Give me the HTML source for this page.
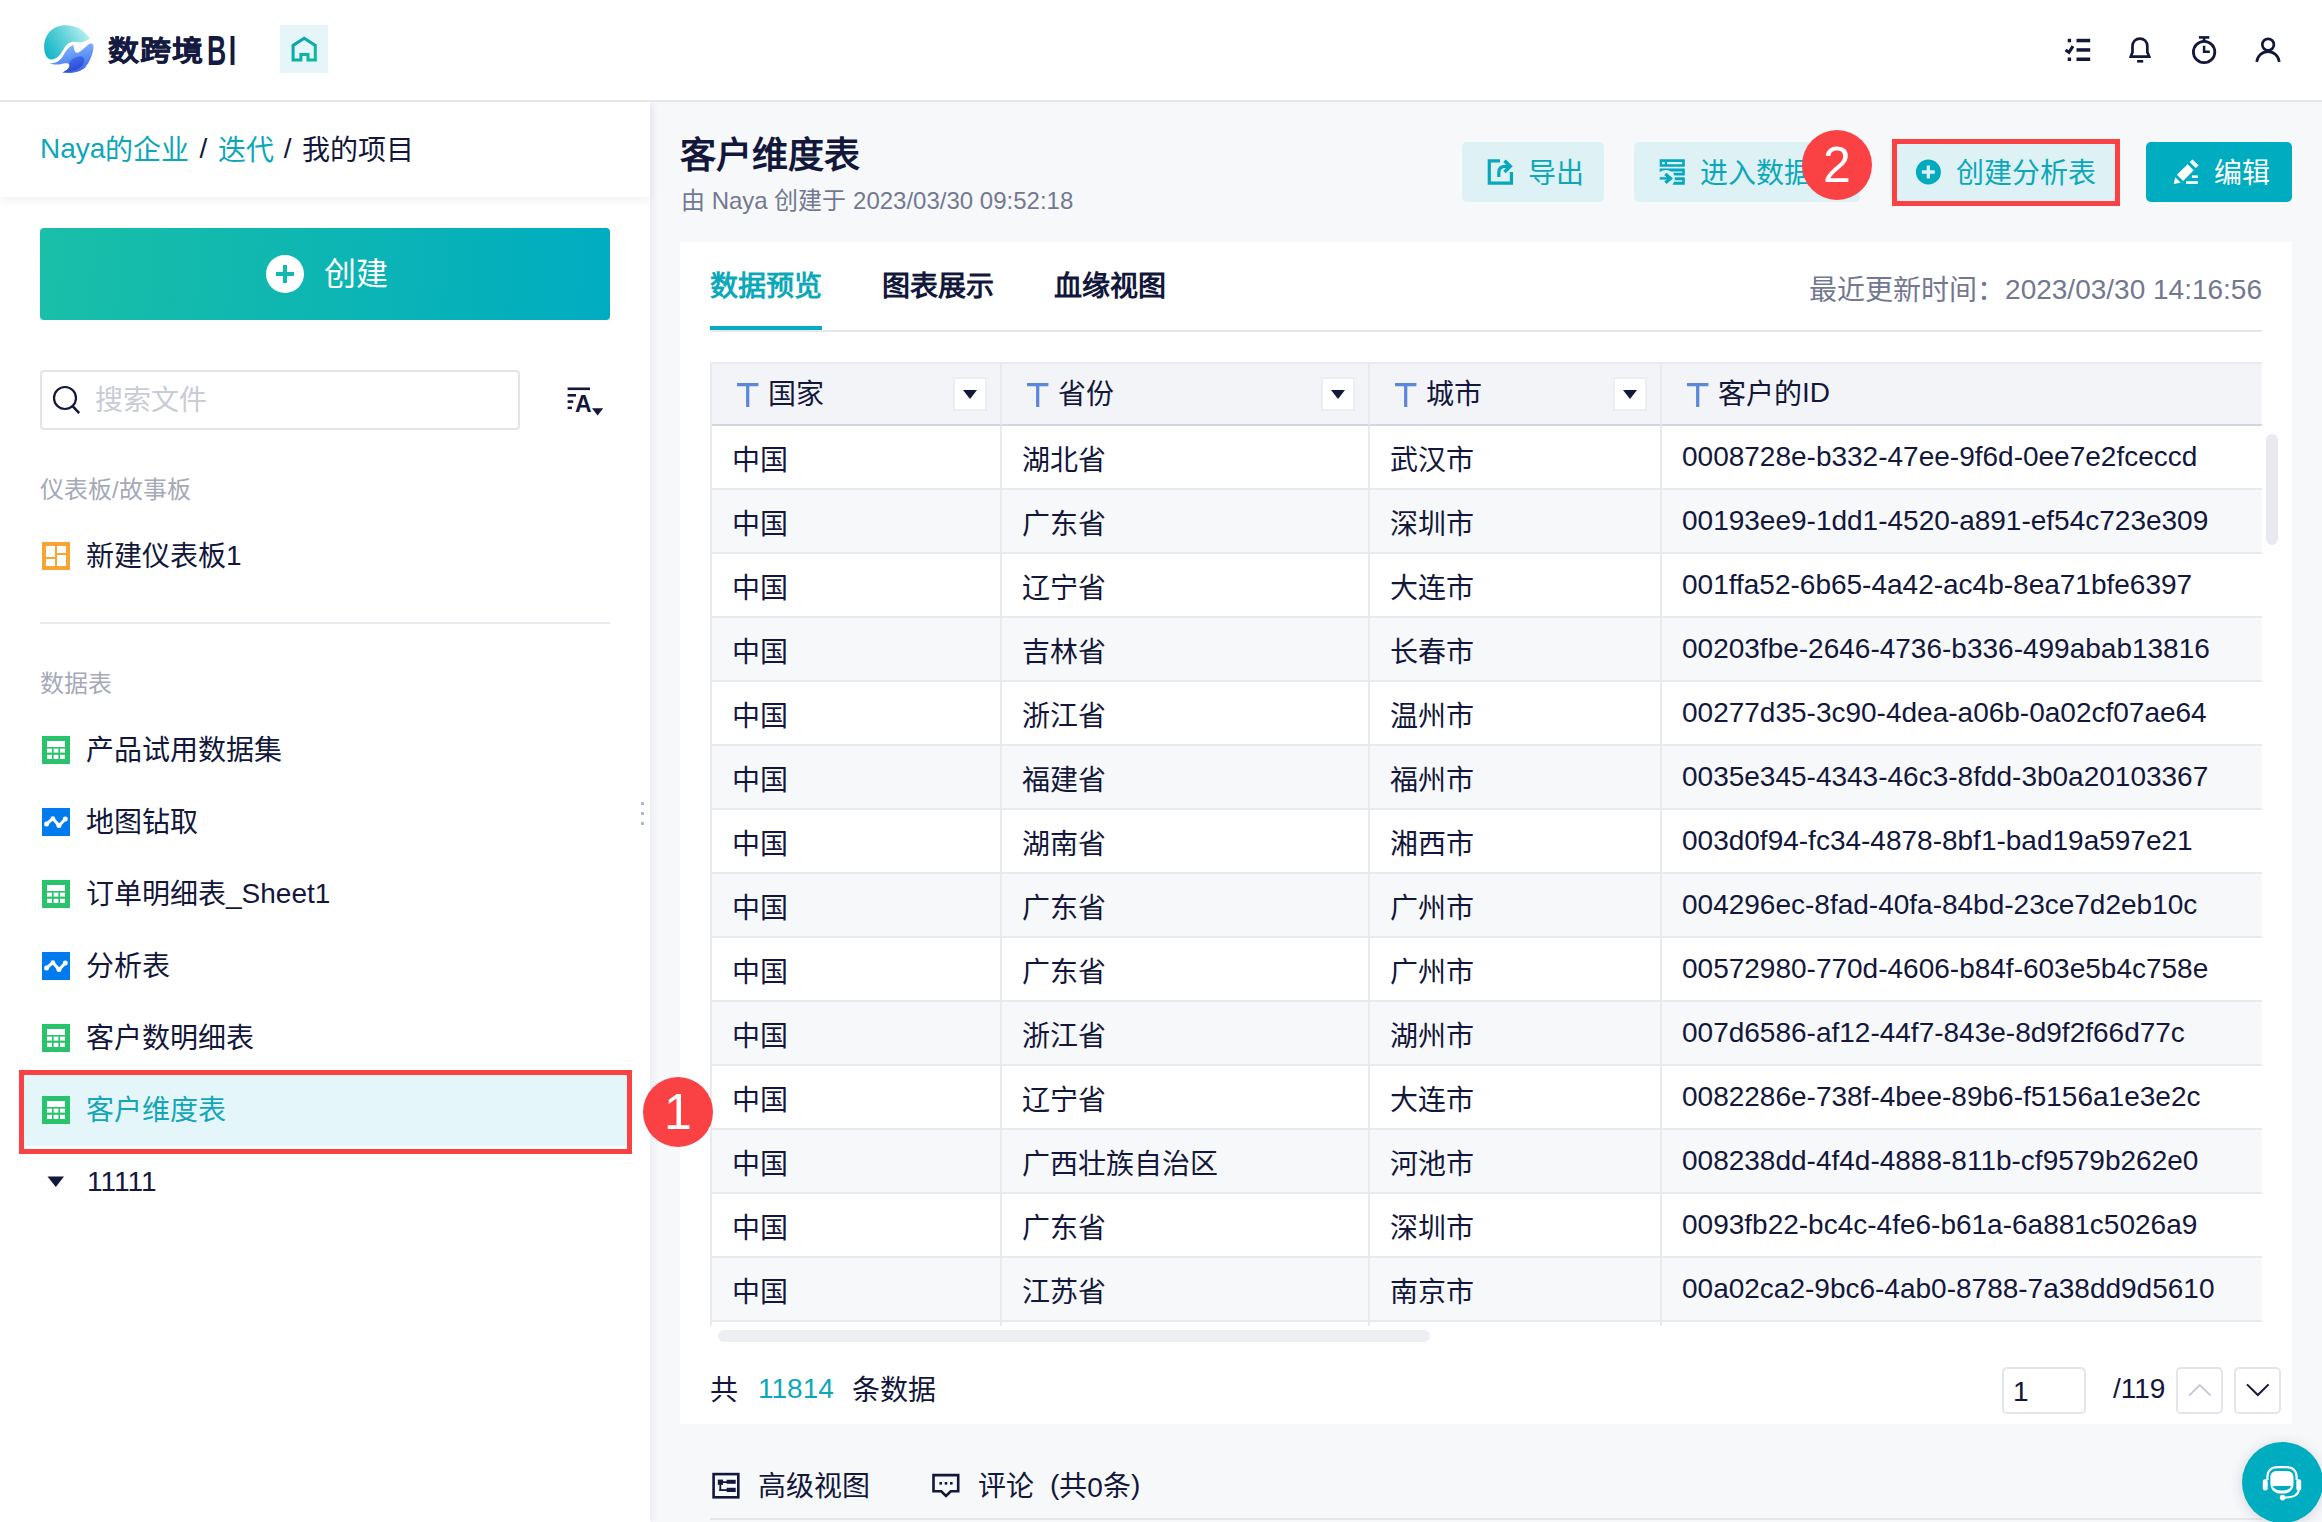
<!DOCTYPE html>
<html lang="zh-CN">
<head>
<meta charset="utf-8">
<title>客户维度表 - 数跨境BI</title>
<style>
*{box-sizing:border-box;margin:0;padding:0}
html,body{width:2322px;height:1522px;overflow:hidden}
body{position:relative;background:#f7f8fa;font-family:"Liberation Sans",sans-serif;color:#12173b;font-size:28px;line-height:1}
.abs{position:absolute}
.z{position:relative;top:2px}
.z1{position:relative;top:1px}
svg{display:block}

/* ---------- top header ---------- */
#top{position:absolute;left:0;top:0;width:2322px;height:102px;background:#fff;border-bottom:2px solid #e6e7ec;z-index:5}
#logo{position:absolute;left:36px;top:18px;width:66px;height:62px}
#brand{position:absolute;left:107px;top:32px;height:36px;font-weight:bold;color:#151a40;white-space:nowrap}
#brand .cj{position:absolute;left:1px;top:0px;font-size:31px;line-height:36px;letter-spacing:1.2px;-webkit-text-stroke:.45px #151a40;transform:scaleY(.9);transform-origin:0 100%}
#brand .bi{position:absolute;left:100px;top:-5px;font-size:43px;line-height:46px;transform:scaleX(.62);transform-origin:0 0;letter-spacing:4px}
#home{position:absolute;left:280px;top:25px;width:48px;height:48px;background:#e6f6f8}
#home svg{position:absolute;left:0;top:0}
.ticon{position:absolute;top:34px}

/* ---------- sidebar ---------- */
#side{position:absolute;left:0;top:102px;width:650px;height:1420px;background:#fff;box-shadow:2px 0 8px rgba(30,40,80,.06)}
#crumb{position:absolute;left:0;top:0;width:650px;height:95px;background:#fff;box-shadow:0 4px 10px rgba(30,40,80,.06);font-size:28px;line-height:93px;padding-left:40px;white-space:nowrap;color:#12173b}
#crumb a{color:#0ca7b9;text-decoration:none}
#crumb i{font-style:normal;margin:0 2.4px}
#create{position:absolute;left:40px;top:126px;width:570px;height:92px;border-radius:4px;background:linear-gradient(96deg,#19bfa7 0%,#0eb6b2 48%,#00acc1 100%);color:#fff;font-size:32px}
#create .plus{position:absolute;left:226px;top:27px;width:38px;height:38px;border-radius:50%;background:#fff}
#create .plus:before{content:"";position:absolute;left:10px;top:17px;width:18px;height:4px;background:#12b8ae}
#create .plus:after{content:"";position:absolute;left:17px;top:10px;width:4px;height:18px;background:#12b8ae}
#create span.t{position:absolute;left:284px;top:28px;line-height:36px}
#search{position:absolute;left:40px;top:268px;width:480px;height:60px;border:2px solid #e3e4ea;border-radius:4px;background:#fff}
#search svg{position:absolute;left:10px;top:12px}
#search span{position:absolute;left:53px;top:12px;line-height:34px;color:#c9cbd6;font-size:28px}
#sort{position:absolute;left:566px;top:281px}
.sec{position:absolute;left:40px;font-size:24px;line-height:30px;color:#a6a9b8;white-space:nowrap}
.item{position:absolute;left:24px;width:603px;height:72px;white-space:nowrap}
.item .ic{position:absolute;left:18px;top:22px;width:28px;height:28px}
.item .tx{position:absolute;left:62px;top:18px;line-height:36px;font-size:28px;color:#12173b}
.item .tx.z1w{top:19px}
.item.sel{background:#e5f6fa}
.item.sel .tx{color:#14a6b8}
#sdiv{position:absolute;left:40px;top:520px;width:570px;height:2px;background:#e9eaf0}
#drag{position:absolute;left:641px;top:700px;width:3px;height:24px}
#drag i{position:absolute;left:0;width:3px;height:3px;background:#b4b7c4}

/* ---------- main ---------- */
#title{position:absolute;left:680px;top:135px;font-size:36px;line-height:42px;font-weight:bold;color:#12173b;white-space:nowrap}
#sub{position:absolute;left:681px;top:186px;font-size:24px;line-height:30px;color:#737891;white-space:nowrap}
.btn{position:absolute;top:142px;height:60px;border-radius:5px;background:#def1f5;color:#0ca8ba;font-size:28px;line-height:63px;white-space:nowrap;overflow:hidden}
.btn svg{position:absolute}
.btn span{position:absolute;top:0}
#card{position:absolute;left:680px;top:242px;width:1612px;height:1182px;background:#fff}
.tab{position:absolute;top:25px;font-size:28px;line-height:40px;font-weight:bold;color:#12173b;white-space:nowrap}
#tabline{position:absolute;left:30px;top:88px;width:1552px;height:2px;background:#e6e7ed}
#tabact{position:absolute;left:30px;top:84px;width:112px;height:4px;background:#05acbf}
#upd{position:absolute;right:30px;top:28px;font-size:28px;line-height:40px;color:#737891;white-space:nowrap}

/* ---------- table ---------- */
#tw{position:absolute;left:30px;top:120px;width:1552px;height:964px;overflow:hidden}
#tw table{border-collapse:separate;border-spacing:0;table-layout:fixed;width:1552px;border-left:2px solid #e9eaf0;border-top:2px solid #e9eaf0}
#tw th,#tw td{height:64px;border-right:2px solid #e9eaf0;border-bottom:2px solid #e9eaf0;text-align:left;font-weight:normal;font-size:28px;line-height:36px;padding:0 0 0 20px;white-space:nowrap;overflow:hidden;color:#12173b;vertical-align:middle}
#tw th{height:62px;background:#f3f4f8;border-bottom-color:#d3d6e0;position:relative;padding-left:25px}
#tw th:last-child,#tw td:last-child{border-right:0}
#tw td.c{padding-top:8px}
#tw tr:nth-child(odd) td{background:#f7f8fa}
#tw th svg.T{position:absolute;left:25px;top:19px}
#tw th span.h.z{top:13px}
#tw th span.h{position:absolute;left:56px;top:11px;line-height:36px}
#tw th i.dd{position:absolute;right:13px;top:13px;width:34px;height:34px;background:#fff;border:2px solid #eceef3}
#tw th i.dd:after{content:"";position:absolute;left:8px;top:11px;border-left:7px solid transparent;border-right:7px solid transparent;border-top:9px solid #12173b}
#vsb{position:absolute;left:1586px;top:192px;width:12px;height:111px;border-radius:6px;background:#e9eaef}
#hsb{position:absolute;left:38px;top:1088px;width:712px;height:12px;border-radius:6px;background:#eeeff2}
#cnt{position:absolute;left:30px;top:1129px;font-size:28px;line-height:36px;white-space:nowrap;color:#12173b}
#cnt b{font-weight:normal;color:#0ca8ba;margin:0 18px 0 20px}
#pgin{position:absolute;left:1322px;top:1125px;width:84px;height:47px;border:2px solid #e4e5ec;border-radius:5px;font-size:28px;line-height:45px;padding-left:9px;color:#12173b;background:#fff}
#pgtot{position:absolute;left:1433px;top:1129px;font-size:28px;line-height:36px;color:#12173b}
.pgb{position:absolute;top:1125px;width:47px;height:47px;border:2px solid #e4e5ec;border-radius:5px;background:#fff}
.pgb svg{position:absolute;left:10px;top:13px}
/* ---------- bottom bar ---------- */
#bbar{position:absolute;left:710px;top:1448px;width:1552px;height:72px;border-bottom:2px solid #e6e7ec;font-size:28px;line-height:36px;color:#12173b;white-space:nowrap}
#bbar svg{position:absolute;top:23px}
#bbar>span{position:absolute;top:19px}
/* ---------- annotations ---------- */
.rbox{position:absolute;border:5px solid #fa4144;z-index:8}
.rnum{position:absolute;width:70px;height:70px;border-radius:50%;background:#fa4144;color:#fff;font-size:50px;line-height:70px;text-align:center;z-index:9}
#float{position:absolute;left:2242px;top:1442px;width:81px;height:81px;border-radius:50%;background:#00acbf;box-shadow:0 2px 14px rgba(20,40,80,.16);z-index:9}
#float svg{position:absolute;left:0;top:0}
</style>
</head>
<body>

<svg width="0" height="0" style="position:absolute">
  <defs>
    <symbol id="i-dash" viewBox="0 0 28 28">
      <rect width="28" height="28" fill="#f9a533"/>
      <rect x="4" y="4" width="9" height="11" fill="#fff"/>
      <rect x="4" y="17" width="9" height="7" fill="#fff"/>
      <rect x="15" y="4" width="9" height="7" fill="#fff"/>
      <rect x="15" y="13" width="9" height="11" fill="#fff"/>
    </symbol>
    <symbol id="i-tbl" viewBox="0 0 28 28">
      <rect width="28" height="28" fill="#27c36d"/>
      <rect x="5" y="5" width="18" height="6" fill="#fff"/>
      <rect x="5" y="12.6" width="5" height="4" fill="#fff"/>
      <rect x="11.6" y="12.6" width="4.8" height="4" fill="#fff"/>
      <rect x="18" y="12.6" width="5" height="4" fill="#fff"/>
      <rect x="5" y="18.8" width="5" height="4.2" fill="#fff"/>
      <rect x="11.6" y="18.8" width="4.8" height="4.2" fill="#fff"/>
      <rect x="18" y="18.8" width="5" height="4.2" fill="#fff"/>
    </symbol>
    <symbol id="i-ana" viewBox="0 0 28 28">
      <rect width="28" height="28" fill="#007bee"/>
      <polyline points="4.4,16 10.9,10.6 16.9,17.6 23.4,11" fill="none" stroke="#fff" stroke-width="3" stroke-linejoin="round" stroke-linecap="round"/>
      <circle cx="4.6" cy="16" r="2.5" fill="#fff"/>
      <circle cx="10.9" cy="10.6" r="2.3" fill="#fff"/>
      <circle cx="16.9" cy="17.6" r="2.5" fill="#fff"/>
      <circle cx="23.3" cy="11" r="2.5" fill="#fff"/>
    </symbol>
  </defs>
</svg>

<!-- ================= TOP BAR ================= -->
<div id="top">
  <div id="logo">
    <svg width="66" height="62" viewBox="0 0 1620 1522">
      <defs>
        <linearGradient id="lgA" x1="0" y1=".7" x2="1" y2=".25"><stop offset="0" stop-color="#17b6c8"/><stop offset=".5" stop-color="#62d2d9"/><stop offset="1" stop-color="#bdf2f2"/></linearGradient>
        <linearGradient id="lgB" x1=".3" y1="0" x2=".6" y2="1"><stop offset="0" stop-color="#8dbdfb"/><stop offset=".5" stop-color="#5f93f6"/><stop offset="1" stop-color="#3f68ea"/></linearGradient>
        <linearGradient id="lgC" x1=".2" y1="0" x2=".7" y2="1"><stop offset="0" stop-color="#4a74ec"/><stop offset="1" stop-color="#2546d0"/></linearGradient>
      </defs>
      <path d="M200 700 C200 400 420 175 720 175 C960 175 1170 270 1320 500 C1230 590 1120 612 1000 590 C860 565 760 620 680 760 C600 900 520 1010 380 1020 C260 1020 200 880 200 700Z" fill="url(#lgA)"/>
      <path d="M330 1110 C480 1120 600 1050 680 900 C760 750 840 680 920 660 C925 760 950 830 1010 860 C1120 820 1220 700 1300 640 C1370 605 1425 640 1410 740 C1390 900 1320 1080 1200 1220 C1080 1330 850 1370 650 1340 C760 1290 830 1220 820 1150 C800 1090 700 1110 600 1135 C500 1150 400 1140 330 1110Z" fill="url(#lgB)"/>
      <path d="M800 1120 C860 1020 960 950 1100 940 C1180 945 1200 1020 1170 1100 C1120 1230 1000 1320 650 1340 C760 1290 835 1220 820 1150 C816 1138 810 1128 800 1120Z" fill="url(#lgC)"/>
    </svg>
  </div>
  <div id="brand"><span class="cj">数跨境</span><span class="bi">BI</span></div>
  <div id="home">
    <svg width="48" height="48" viewBox="280 25 48 48"><defs><linearGradient id="lgH" x1="0" y1="0" x2="1" y2="1"><stop offset="0" stop-color="#0a9dbb"/><stop offset="1" stop-color="#0bbd9b"/></linearGradient></defs><path d="M300.9 59.9 H293.1 V45.4 L304.2 38.3 L315.3 45.4 V59.9 H308 V54.4 H300.9 Z" fill="none" stroke="url(#lgH)" stroke-width="3" stroke-linejoin="miter"/></svg>
  </div>
  <svg class="ticon" style="left:2060px;top:30px" width="230" height="40" viewBox="2060 30 230 40" fill="none" stroke="#12173b" stroke-width="3">
    <!-- task list -->
    <g stroke="none" fill="#12173b">
      <rect x="2067.7" y="38.8" width="3.4" height="3.5"/><rect x="2067.7" y="57.5" width="3.4" height="3.5"/>
      <rect x="2076.5" y="38.8" width="13.7" height="3.5"/><rect x="2076.5" y="48.2" width="13.7" height="3.5"/><rect x="2076.5" y="57.5" width="13.7" height="3.5"/>
    </g>
    <path d="M2065.5 50 L2069 52.4 L2073 46.1" stroke-width="3.1"/>
    <!-- bell -->
    <path d="M2130.8 56.6 H2149.2 L2147.3 51.9 V46 C2147.3 41.6 2144 38.6 2139.9 38.6 C2135.8 38.6 2132.5 41.6 2132.5 46 V51.9 Z" stroke-width="2.7" stroke-linejoin="miter"/>
    <rect x="2137.1" y="60" width="6.1" height="2.6" fill="#12173b" stroke="none"/>
    <!-- timer -->
    <circle cx="2204.1" cy="52" r="10.7" stroke-width="2.8"/>
    <rect x="2198.9" y="36.1" width="10.4" height="2.6" fill="#12173b" stroke="none"/>
    <rect x="2202.8" y="38" width="2.6" height="3.6" fill="#12173b" stroke="none"/>
    <path d="M2204.1 45.8 V51.8 H2209.8" stroke-width="2.5"/>
    <!-- user -->
    <circle cx="2268.1" cy="44.6" r="5.8" stroke-width="2.7"/>
    <path d="M2256.76 61.8 A11.3 11.3 0 0 1 2279.24 61.8" stroke-width="2.7"/>
  </svg>
</div>

<!-- ================= SIDEBAR ================= -->
<div id="side">
  <div id="crumb"><a>Naya<span class="z">的企业</span></a> <i>/</i> <a class="z">迭代</a> <i>/</i> <span class="z">我的项目</span></div>
  <div id="create"><i class="plus"></i><span class="t">创建</span></div>
  <div id="search">
    <svg width="40" height="34" viewBox="0 0 40 34" fill="none" stroke="#12173b"><circle cx="13" cy="14" r="11" stroke-width="2.2"/><path d="M20.6 22.2 L27.2 29.2" stroke-width="2.6"/></svg>
    <span>搜索文件</span>
  </div>
  <div id="sort">
    <svg width="40" height="34" viewBox="566 383 40 34"><g fill="#12173b"><rect x="567.6" y="387.5" width="22.4" height="2.6"/><rect x="567.6" y="394" width="8.4" height="2.6"/><rect x="567.6" y="400.3" width="5.6" height="2.6"/><rect x="567.6" y="406.6" width="4.4" height="2.5"/><path d="M592 408.2 H603.2 L597.6 415.4 Z"/><text x="575" y="411.8" font-family="Liberation Sans, sans-serif" font-weight="bold" font-size="23">A</text></g></svg>
  </div>
  <div class="sec" style="top:373px">仪表板/故事板</div>
  <div class="item" style="top:418px"><svg class="ic" width="28" height="28"><use href="#i-dash"/></svg><span class="tx"><span class="z1">新建仪表板</span>1</span></div>
  <div id="sdiv"></div>
  <div class="sec" style="top:567px">数据表</div>
  <div class="item" style="top:612px"><svg class="ic" width="28" height="28"><use href="#i-tbl"/></svg><span class="tx z1w">产品试用数据集</span></div>
  <div class="item" style="top:684px"><svg class="ic" width="28" height="28"><use href="#i-ana"/></svg><span class="tx z1w">地图钻取</span></div>
  <div class="item" style="top:756px"><svg class="ic" width="28" height="28"><use href="#i-tbl"/></svg><span class="tx"><span class="z1">订单明细表</span>_Sheet1</span></div>
  <div class="item" style="top:828px"><svg class="ic" width="28" height="28"><use href="#i-ana"/></svg><span class="tx z1w">分析表</span></div>
  <div class="item" style="top:900px"><svg class="ic" width="28" height="28"><use href="#i-tbl"/></svg><span class="tx z1w">客户数明细表</span></div>
  <div class="item sel" style="top:972px"><svg class="ic" width="28" height="28"><use href="#i-tbl"/></svg><span class="tx z1w">客户维度表</span></div>
  <div class="item" style="top:1044px"><svg class="ic" style="left:23px;top:30px" width="18" height="12"><path d="M0.5 0.5 H17 L8.8 11 Z" fill="#12173b"/></svg><span class="tx" style="left:63px">11111</span></div>
  <div id="drag"><i style="top:0"></i><i style="top:10px"></i><i style="top:20px"></i></div>
</div>

<!-- ================= MAIN ================= -->
<div id="title">客户维度表</div>
<div id="sub">由 Naya 创建于 2023/03/30 09:52:18</div>

<div id="card">
  <div class="tab" style="left:30px;color:#0ca8ba">数据预览</div>
  <div class="tab" style="left:202px">图表展示</div>
  <div class="tab" style="left:374px">血缘视图</div>
  <div id="upd"><span class="z1">最近更新时间：</span>2023/03/30 14:16:56</div>
  <div id="tabline"></div>
  <div id="tabact"></div>
  <div id="tw">
    <table>
      <colgroup><col style="width:290px"><col style="width:368px"><col style="width:292px"><col></colgroup>
      <tr><th><svg class="T" width="22" height="24" viewBox="0 0 22 24"><path d="M0 1.6 H21.4 M10.7 1.6 V24" fill="none" stroke="#5c87d9" stroke-width="3.2"/></svg><span class="h z">国家</span><i class="dd"></i></th><th><svg class="T" width="22" height="24" viewBox="0 0 22 24"><path d="M0 1.6 H21.4 M10.7 1.6 V24" fill="none" stroke="#5c87d9" stroke-width="3.2"/></svg><span class="h z">省份</span><i class="dd"></i></th><th><svg class="T" width="22" height="24" viewBox="0 0 22 24"><path d="M0 1.6 H21.4 M10.7 1.6 V24" fill="none" stroke="#5c87d9" stroke-width="3.2"/></svg><span class="h z">城市</span><i class="dd"></i></th><th><svg class="T" width="22" height="24" viewBox="0 0 22 24"><path d="M0 1.6 H21.4 M10.7 1.6 V24" fill="none" stroke="#5c87d9" stroke-width="3.2"/></svg><span class="h"><span class="z">客户的</span>ID</span></th></tr>
      <tr><td class="c">中国</td><td class="c">湖北省</td><td class="c">武汉市</td><td>0008728e-b332-47ee-9f6d-0ee7e2fceccd</td></tr>
      <tr><td class="c">中国</td><td class="c">广东省</td><td class="c">深圳市</td><td>00193ee9-1dd1-4520-a891-ef54c723e309</td></tr>
      <tr><td class="c">中国</td><td class="c">辽宁省</td><td class="c">大连市</td><td>001ffa52-6b65-4a42-ac4b-8ea71bfe6397</td></tr>
      <tr><td class="c">中国</td><td class="c">吉林省</td><td class="c">长春市</td><td>00203fbe-2646-4736-b336-499abab13816</td></tr>
      <tr><td class="c">中国</td><td class="c">浙江省</td><td class="c">温州市</td><td>00277d35-3c90-4dea-a06b-0a02cf07ae64</td></tr>
      <tr><td class="c">中国</td><td class="c">福建省</td><td class="c">福州市</td><td>0035e345-4343-46c3-8fdd-3b0a20103367</td></tr>
      <tr><td class="c">中国</td><td class="c">湖南省</td><td class="c">湘西市</td><td>003d0f94-fc34-4878-8bf1-bad19a597e21</td></tr>
      <tr><td class="c">中国</td><td class="c">广东省</td><td class="c">广州市</td><td>004296ec-8fad-40fa-84bd-23ce7d2eb10c</td></tr>
      <tr><td class="c">中国</td><td class="c">广东省</td><td class="c">广州市</td><td>00572980-770d-4606-b84f-603e5b4c758e</td></tr>
      <tr><td class="c">中国</td><td class="c">浙江省</td><td class="c">湖州市</td><td>007d6586-af12-44f7-843e-8d9f2f66d77c</td></tr>
      <tr><td class="c">中国</td><td class="c">辽宁省</td><td class="c">大连市</td><td>0082286e-738f-4bee-89b6-f5156a1e3e2c</td></tr>
      <tr><td class="c">中国</td><td class="c">广西壮族自治区</td><td class="c">河池市</td><td>008238dd-4f4d-4888-811b-cf9579b262e0</td></tr>
      <tr><td class="c">中国</td><td class="c">广东省</td><td class="c">深圳市</td><td>0093fb22-bc4c-4fe6-b61a-6a881c5026a9</td></tr>
      <tr><td class="c">中国</td><td class="c">江苏省</td><td class="c">南京市</td><td>00a02ca2-9bc6-4ab0-8788-7a38dd9d5610</td></tr>
      <tr><td>&nbsp;</td><td>&nbsp;</td><td>&nbsp;</td><td>&nbsp;</td></tr>
    </table>
  </div>
  <div id="vsb"></div>
  <div id="hsb"></div>
  <div id="cnt"><span class="z">共</span><b>11814</b><span class="z">条数据</span></div>
  <div id="pgin">1</div>
  <div id="pgtot">/119</div>
  <div class="pgb" style="left:1496px"><svg width="24" height="16" viewBox="0 0 24 16"><path d="M1 13.6 L11.8 3 L22.6 13.6" fill="none" stroke="#c5c8d4" stroke-width="1.8"/></svg></div>
  <div class="pgb" style="left:1554px"><svg width="24" height="16" viewBox="0 0 24 16"><path d="M1 2.4 L11.8 13 L22.6 2.4" fill="none" stroke="#12173b" stroke-width="2"/></svg></div>
</div>

<!-- action buttons -->
<div class="btn" style="left:1462px;width:142px">
  <svg style="left:22px;top:14px" width="32" height="32" viewBox="1484 156 32 32" fill="none" stroke="#05a8bc" stroke-width="3.2"><path d="M1500 160.9 H1489.3 V183.1 H1511.4 V172.1"/><path d="M1498.8 177 V172.4 C1498.8 168.2 1501.6 166.3 1505.2 166.3 H1509.4"/><path d="M1504.5 160.7 L1510.2 166.3 L1504.5 171.9" stroke-width="3.5"/></svg>
  <span style="left:66px">导出</span>
</div>
<div class="btn" style="left:1634px;width:226px">
  <svg style="left:22px;top:14px" width="32" height="32" viewBox="1656 156 32 32" fill="#05a8bc"><path fill-rule="evenodd" d="M1659.7 159.2 H1684.8 V166.8 H1659.7Z M1662.1 162 V164.2 H1664.7 V162Z M1667 162 V164.2 H1682.2 V162Z"/><path d="M1659.7 168.4 H1684.8 V175.6 H1674.2 L1673.2 172.8 H1682.2 V171.4 H1671 C1667.6 169.4 1663 169.6 1659.7 172.2Z"/><path d="M1674.8 177.2 H1684.8 V184.8 H1672.4 L1674.2 181.8 H1682.2 V180.2 H1674.8Z"/><rect x="1659.7" y="177.2" width="8.6" height="2.4"/><path d="M1665.4 174.1 L1670.4 178.4 L1665.4 182.7" fill="none" stroke="#05a8bc" stroke-width="3.3"/></svg>
  <span style="left:66px">进入数据处理</span>
</div>
<div class="btn" style="left:1890px;width:230px">
  <svg style="left:24px;top:16px" width="28" height="28" viewBox="1914 158 28 28"><path fill="#00aabf" fill-rule="evenodd" d="M1928.4 159.5 A12.5 12.5 0 1 0 1928.4 184.5 A12.5 12.5 0 1 0 1928.4 159.5Z M1926.7 165.6 H1930 V170.3 H1934.8 V173.7 H1930 V178.5 H1926.7 V173.7 H1921.8 V170.3 H1926.7Z"/></svg>
  <span style="left:66px">创建分析表</span>
</div>
<div class="btn" style="left:2146px;width:146px;background:#00acbf;color:#fff">
  <svg style="left:24px;top:14px" width="32" height="32" viewBox="2170 156 32 32" fill="#fff"><path d="M2192.5 159.4 L2198.7 165.5 L2195.7 167.9 L2189.7 162.1Z"/><path d="M2187.6 164.2 L2193.7 170.3 L2183.1 180.9 L2176.9 174.7Z"/><path d="M2175.2 177.2 L2180.8 182.8 L2173.7 183.9Z"/><rect x="2191.9" y="175.4" width="6" height="2.6"/><rect x="2186" y="181.2" width="11.9" height="2.7"/></svg>
  <span style="left:68px">编辑</span>
</div>

<!-- bottom bar -->
<div id="bbar">
  <svg style="left:0;top:20px" width="32" height="32" viewBox="710 1468 32 32" fill="none" stroke="#12173b" stroke-width="2.6"><rect x="713.6" y="1474.1" width="24.7" height="23.2"/><g stroke="none" fill="#12173b"><rect x="717.8" y="1479.6" width="5.2" height="5.2"/><rect x="726.7" y="1479.8" width="9" height="4"/><rect x="726.7" y="1487.8" width="9" height="4.2"/><rect x="719.4" y="1484" width="1.8" height="7"/><rect x="719.4" y="1489.2" width="8" height="1.8"/><rect x="722" y="1481.2" width="6" height="1.8"/></g></svg>
  <span style="left:48px;top:21px">高级视图</span>
  <svg style="left:220px;top:20px" width="32" height="32" viewBox="930 1468 32 32" fill="none" stroke="#12173b" stroke-width="2.6"><path d="M933.5 1475.1 H958.2 V1491.3 H950.8 L946 1496 L941.2 1491.3 H933.5 Z" stroke-linejoin="miter"/><g stroke="none" fill="#12173b"><rect x="939.4" y="1482" width="2.6" height="2.6"/><rect x="944.7" y="1482" width="2.6" height="2.6"/><rect x="950" y="1482" width="2.6" height="2.6"/></g></svg>
  <span style="left:268px;top:19px"><span class="z">评论</span><span style="margin-left:16px">(<span class="z">共<span class="z1">0</span>条</span>)</span></span>
</div>

<!-- tutorial annotations -->
<div class="rbox" style="left:19px;top:1070px;width:613px;height:84px"></div>
<div class="rnum" style="left:643px;top:1077px">1</div>
<div class="rbox" style="left:1892px;top:139px;width:228px;height:67px"></div>
<div class="rnum" style="left:1802px;top:130px">2</div>

<!-- help float -->
<div id="float">
  <svg width="81" height="81" viewBox="2242 1442 81 81" fill="none" stroke="#fff">
    <path d="M2267.4 1480 V1477 C2267.4 1470.6 2271.6 1467.1 2277.5 1467.1 H2286.4 C2292.3 1467.1 2296.6 1470.6 2296.6 1477 V1480" stroke-width="2.2"/>
    <rect x="2262.8" y="1479.2" width="4.9" height="11.2" rx="2.2" fill="#fff" stroke="none"/>
    <rect x="2296.3" y="1479.2" width="4.9" height="11.2" rx="2.2" fill="#fff" stroke="none"/>
    <path d="M2270.4 1477.4 C2270.4 1473.4 2273 1471 2277 1471 H2287 C2291 1471 2293.5 1473.4 2293.5 1477.4 V1483.5 C2293.5 1490 2289 1493.6 2283.4 1493.6 H2280.6 C2275 1493.6 2270.4 1490 2270.4 1483.5Z M2272.8 1486.1 C2274 1489.4 2277.6 1490.6 2282 1490.6 C2286.4 1490.6 2290 1489.4 2291.2 1486.1Z" fill="#fff" fill-rule="evenodd" stroke="none"/>
    <path d="M2298.8 1489.6 C2298.4 1494.6 2293 1497.6 2284 1497.6" stroke-width="2"/>
    <circle cx="2282.6" cy="1497.6" r="2.8" fill="#fff" stroke="none"/>
  </svg>
</div>

</body>
</html>
